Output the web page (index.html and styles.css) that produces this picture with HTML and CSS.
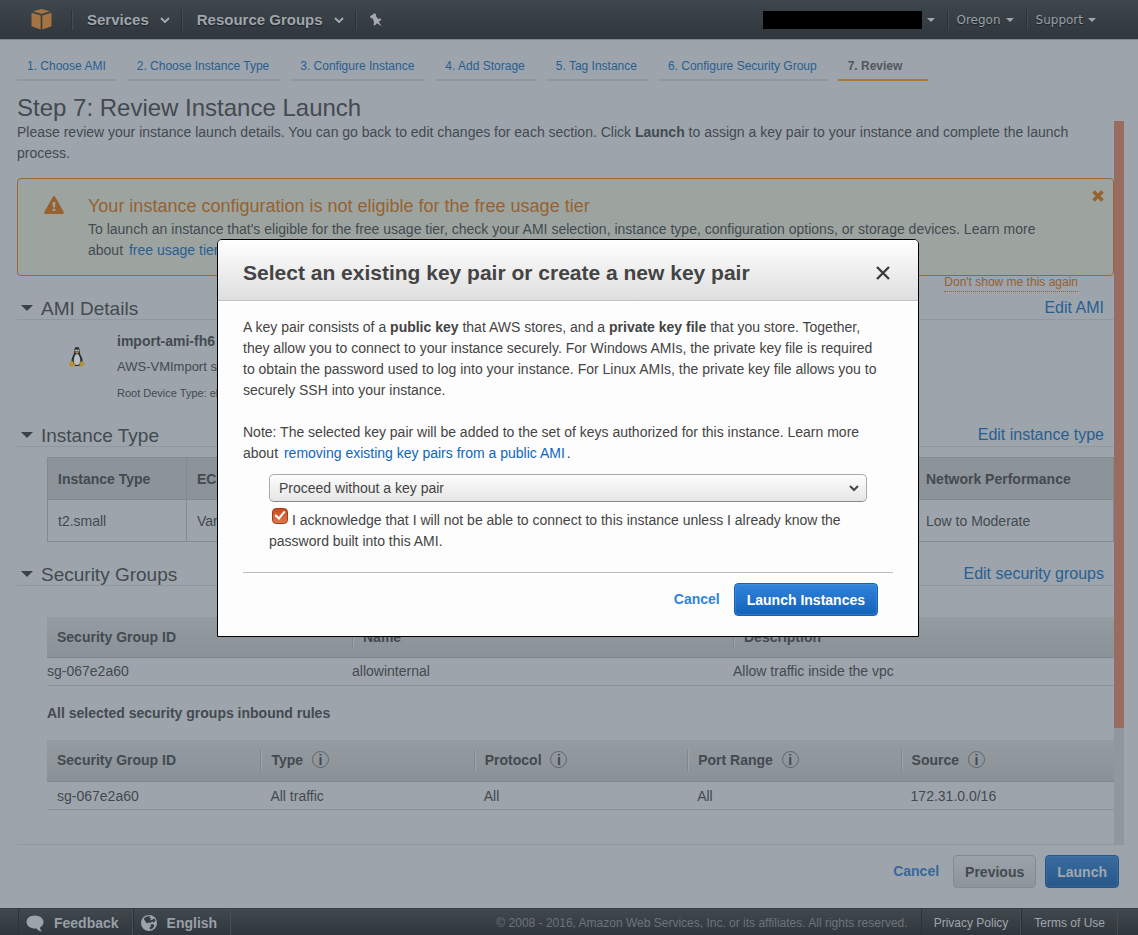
FILE: index.html
```html
<!DOCTYPE html>
<html lang="en">
  <head>
    <meta charset="UTF-8" />
    <meta name="viewport" content="width=device-width, initial-scale=1.0" />
    <title>Review Instance Launch</title>
    <link rel="stylesheet" href="styles.css">
  </head>
  <body>
    <header class="topbar">
      <a href="#" class="logo" aria-label="Home">
        <svg width="21" height="21" viewBox="0 0 21 21" fill="#a4733f">
          <path d="M10.500 0 L19 2.200 L10.500 4.900 L2 2.200 Z" />
          <path d="M0.500 3.700 L9.700 6.500 V20.500 L0.500 17.200 Z" />
          <path d="M20.500 3.700 L11.300 6.500 V20.500 L20.500 17.200 Z" />
        </svg>
      </a>
      <button class="nav-item">
        Services
        <svg width="10" height="6" viewBox="0 0 10 6"><path d="M1 1 L5 5 L9 1" /></svg>
      </button>
      <button class="nav-item">
        Resource Groups
        <svg width="10" height="6" viewBox="0 0 10 6"><path d="M1 1 L5 5 L9 1" /></svg>
      </button>
      <button class="nav-pin" aria-label="Pin shortcuts">
        <svg width="14" height="14" viewBox="0 0 14 14" fill="#a3a9af">
          <path d="M1 3.500 L5.500 0.300 L7.300 1.500 L6.800 3 L9.300 6 L11.800 5.600 L12.300 6.800 L9.800 8.800 L12.600 13.300 L8 10.300 L5.800 12.600 L4.700 12 L5 8.800 L3.400 5.300 L1.700 5.200 Z" />
        </svg>
      </button>
      <div class="nav-right">
        <button class="nav-menu" aria-label="Account"><span class="account"></span><span class="caret"></span></button>
        <button class="nav-menu">Oregon<span class="caret"></span></button>
        <button class="nav-menu">Support<span class="caret"></span></button>
      </div>
    </header>

    <main class="wizard">
      <nav class="steps">
        <a href="#">1. Choose AMI</a>
        <a href="#">2. Choose Instance Type</a>
        <a href="#">3. Configure Instance</a>
        <a href="#">4. Add Storage</a>
        <a href="#">5. Tag Instance</a>
        <a href="#">6. Configure Security Group</a>
        <a href="#" class="active">7. Review</a>
      </nav>
      <h1>Step 7: Review Instance Launch</h1>

      <div class="scroll-area">
        <div class="review">
          <p class="intro">Please review your instance launch details. You can go back to edit changes for each section. Click <b>Launch</b> to assign a key pair to your instance and complete the launch process.</p>

          <div class="alert">
            <svg class="alert-icon" width="20" height="18" viewBox="0 0 20 18">
              <path fill="#976130" d="M10 0 Q10.800 0 11.300 1 L19.700 16 Q20.200 17.900 18.500 18 H1.500 Q-0.200 17.900 0.300 16 L8.700 1 Q9.200 0 10 0 Z" />
              <path fill="#9da4a0" d="M8.500 6 H11.500 L11 11.500 H9 Z M8.700 12.700 H11.300 V15 H8.700 Z" />
            </svg>
            <div class="alert-text">
              <h2>Your instance configuration is not eligible for the free usage tier</h2>
              <p>To launch an instance that's eligible for the free usage tier, check your AMI selection, instance type, configuration options, or storage devices. Learn more about <a href="#">free usage tier</a></p>
            </div>
            <button class="alert-close" aria-label="Dismiss">
              <svg width="12" height="12" viewBox="0 0 12 12"><path d="M1.500 1.500 L10.500 10.500 M10.500 1.500 L1.500 10.500" stroke="#976130" stroke-width="3.400" /></svg>
            </button>
            <a href="#" class="alert-hide">Don't show me this again</a>
          </div>

          <div class="section-head">
            <h2>AMI Details</h2>
            <a href="#">Edit AMI</a>
          </div>
          <div class="ami">
            <svg class="tux" width="18" height="22" viewBox="0 0 18 22">
              <path fill="#2b3035" d="M9 1 C6.600 1 6.200 3 6.400 5.600 C6.500 8 4 10.500 3.600 13.500 C3.300 16 4 19 6 20 H12 C14 19 15 16.500 14.500 13.500 C14 10.500 11.600 8.500 11.700 5.600 C11.800 3 11.300 1 9 1 Z" />
              <path fill="#b9bec2" d="M9 8 C7.300 8 6 11 5.800 14 C5.700 17 7 19 9 19 C11 19 12.500 17 12.300 14 C12 11 10.700 8 9 8 Z" />
              <circle cx="8" cy="4.500" r="1" fill="#b9bec2" />
              <circle cx="10.100" cy="4.500" r="1" fill="#b9bec2" />
              <path fill="#ad8a35" d="M7 6.300 L9 5.300 L11 6.300 L9 8 Z" />
              <path fill="#b39339" d="M1 16.500 L4 14.800 L7.300 18.500 Q7.500 21 5.300 20.800 L1 19.800 Z" />
              <path fill="#b39339" d="M11.500 16.500 L15 15 L17 18 L13.500 20.700 Q11.200 21 11.300 19 Z" />
            </svg>
            <div>
              <p class="ami-name">import-ami-fh6</p>
              <p class="ami-desc">AWS-VMImport service</p>
              <p class="ami-root">Root Device Type: ebs</p>
            </div>
          </div>

          <div class="section-head">
            <h2>Instance Type</h2>
            <a href="#">Edit instance type</a>
          </div>
          <table class="type-table">
            <thead>
              <tr><th class="col-type">Instance Type</th><th>ECUs</th><th class="col-network">Network Performance</th></tr>
            </thead>
            <tbody>
              <tr><td>t2.small</td><td>Variable</td><td>Low to Moderate</td></tr>
            </tbody>
          </table>

          <div class="section-head">
            <h2>Security Groups</h2>
            <a href="#">Edit security groups</a>
          </div>
          <table class="grid groups">
            <thead>
              <tr><th class="col-id">Security Group ID</th><th class="col-name">Name</th><th>Description</th></tr>
            </thead>
            <tbody>
              <tr><td>sg-067e2a60</td><td>allowinternal</td><td>Allow traffic inside the vpc</td></tr>
            </tbody>
          </table>

          <h3>All selected security groups inbound rules</h3>
          <table class="grid rules">
            <thead>
              <tr>
                <th>Security Group ID</th>
                <th>Type <span class="info">i</span></th>
                <th>Protocol <span class="info">i</span></th>
                <th>Port Range <span class="info">i</span></th>
                <th>Source <span class="info">i</span></th>
              </tr>
            </thead>
            <tbody>
              <tr><td>sg-067e2a60</td><td>All traffic</td><td>All</td><td>All</td><td>172.31.0.0/16</td></tr>
            </tbody>
          </table>
        </div>
        <div class="scrollbar"><div class="thumb"></div></div>
      </div>

      <div class="actions">
        <a href="#" class="cancel">Cancel</a>
        <button class="btn">Previous</button>
        <button class="btn btn-primary">Launch</button>
      </div>
    </main>

    <footer class="bottombar">
      <button class="foot-item">
        <svg width="18" height="17" viewBox="0 0 18 17" fill="#9da3aa">
          <path d="M8.800 0.500 C13.500 0.500 17.500 3.300 17.500 7 C17.500 9.500 16 11.300 14 12.500 C14 14 15 15.500 16 16.500 C13.500 16.300 11.500 15 10.500 13.500 C5 14 0.500 11 0.500 7 C0.500 3.300 4 0.500 8.800 0.500 Z" />
        </svg>
        Feedback
      </button>
      <button class="foot-item">
        <svg width="16" height="16" viewBox="0 0 16 16">
          <circle cx="8" cy="8" r="8" fill="#9da3aa" />
          <path fill="#363d43" d="M6 1.500 L9 1 L8.500 2.500 L10 3.500 L9 5.500 L11.500 4.500 L13.500 3.500 L14.500 6 L12.500 7.500 L11 6.500 L9.500 8 L7.500 7.500 L6 8.500 L4 6 L2.800 3.800 L4 2.500 Z" />
          <path fill="#363d43" d="M9.500 9.500 L12 9 L13.500 11 L11.500 13.500 L9 14.500 L8.500 12.500 L10 11.500 Z" />
        </svg>
        English
      </button>
      <div class="foot-right">
        <span class="copyright">© 2008 - 2016, Amazon Web Services, Inc. or its affiliates. All rights reserved.</span>
        <a href="#">Privacy Policy</a>
        <a href="#">Terms of Use</a>
      </div>
    </footer>

    <div class="modal-wrap">
      <div class="modal" role="dialog" aria-labelledby="modalTitle">
        <div class="modal-head">
          <h2 id="modalTitle">Select an existing key pair or create a new key pair</h2>
          <button class="modal-close" aria-label="Close">
            <svg width="14" height="14" viewBox="0 0 14 14"><path d="M1 1 L13 13 M13 1 L1 13" stroke="#3c3c3c" stroke-width="2.400" /></svg>
          </button>
        </div>
        <div class="modal-body">
          <p>A key pair consists of a <b>public key</b> that AWS stores, and a <b>private key file</b> that you store. Together, they allow you to connect to your instance securely. For Windows AMIs, the private key file is required to obtain the password used to log into your instance. For Linux AMIs, the private key file allows you to securely SSH into your instance.</p>
          <p>Note: The selected key pair will be added to the set of keys authorized for this instance. Learn more about <a href="#">removing existing key pairs from a public AMI</a>.</p>
          <div class="key-form">
            <div class="select-box">
              <select aria-label="Key pair option">
                <option>Proceed without a key pair</option>
              </select>
              <svg width="10" height="7" viewBox="0 0 10 7"><path d="M1 1 L5 5 L9 1" /></svg>
            </div>
            <label class="ack"><input type="checkbox" checked>I acknowledge that I will not be able to connect to this instance unless I already know the password built into this AMI.</label>
          </div>
          <div class="modal-actions">
            <a href="#" class="cancel">Cancel</a>
            <button class="btn btn-primary">Launch Instances</button>
          </div>
        </div>
      </div>
    </div>
  </body>
</html>
```
FILE: styles.css
```css
* {
  box-sizing: border-box;
}

body {
  display: flex;
  flex-direction: column;
  height: 100vh;
  margin: 0;
  overflow: hidden;
  background: #9da4ab;
  color: #434a50;
  font-family: "Liberation Sans", Arial, sans-serif;
  font-size: 14px;
  line-height: 21px;
}

h1,
h2,
h3,
p {
  margin: 0;
  font-weight: normal;
}

a {
  color: #285f92;
  text-decoration: none;
}

button {
  padding: 0;
  border: none;
  background: none;
  font-family: inherit;
  cursor: pointer;
}

table {
  border-collapse: collapse;
  width: 100%;
}

th {
  text-align: left;
}

/* Top bar */
.topbar {
  display: flex;
  align-items: center;
  flex: none;
  height: 40px;
  padding: 0 32px 0 31px;
  background: linear-gradient(#3f474e, #2f363c);
  border-bottom: 1px solid #7f868d;
}

.logo {
  display: flex;
  padding-right: 19px;
}

.nav-item,
.nav-pin {
  display: flex;
  align-items: center;
  gap: 11px;
  height: 20px;
  padding: 0 11px 0 15px;
  border-left: 1px solid #2c3237;
  box-shadow: inset 1px 0 #454d54;
  color: #a0a6ac;
  font-size: 15px;
  font-weight: bold;
  text-shadow: 0 1px 1px #1c2125;
}

.nav-item svg {
  fill: none;
  stroke: #a0a6ac;
  stroke-width: 2;
}

.nav-pin {
  padding: 0 12px 0 13px;
}

.nav-right {
  display: flex;
  margin-left: auto;
}

.nav-menu {
  display: flex;
  align-items: center;
  gap: 5px;
  height: 20px;
  padding: 0 12px 0 9px;
  border-left: 1px solid #2c3237;
  box-shadow: inset 1px 0 #454d54;
  color: #9aa0a6;
  font-family: "DejaVu Sans", sans-serif;
  font-size: 12px;
  text-shadow: 0 1px 1px #1c2125;
}

.nav-menu:first-child {
  border-left: none;
  box-shadow: none;
}

.nav-menu:last-child {
  padding-right: 10px;
}

.account {
  width: 159px;
  height: 18px;
  background: #000;
}

.caret {
  border: 4px solid transparent;
  border-top-color: #a0a6ac;
  border-bottom: none;
}

/* Wizard */
.wizard {
  display: flex;
  flex-direction: column;
  flex: 1;
  min-height: 0;
  padding: 16px 14px 20px 17px;
}

.steps {
  display: flex;
  gap: 10px;
  font-size: 12px;
}

.steps a {
  padding: 0 11px 2px 10px;
  border-bottom: 2px solid #90979e;
}

.steps .active {
  min-width: 90px;
  border-color: #a87637;
  color: #51575d;
  font-weight: bold;
}

.wizard h1 {
  padding-top: 13px;
  font-size: 24px;
  line-height: 27px;
}

.scroll-area {
  display: flex;
  flex: 1;
  min-height: 0;
  border-bottom: 1px solid #90979e;
}

.review {
  flex: 1;
  overflow: hidden;
}

.scrollbar {
  width: 10px;
  background: #90979e;
}

.thumb {
  height: 84%;
  background: #996c60;
}

/* Free tier alert */
.intro {
  padding-top: 1px;
}

.alert {
  position: relative;
  display: flex;
  gap: 24px;
  margin: 14px 0 22px;
  padding: 15px 50px 14px 26px;
  border: 1px solid #976835;
  border-radius: 4px;
  background: #9da4a0;
}

.alert-icon {
  flex: none;
  margin-top: 2px;
}

.alert-text h2 {
  padding-bottom: 1px;
  color: #976130;
  font-size: 18px;
  line-height: 24px;
}

.alert-text a {
  padding-left: 2px;
}

.alert-close {
  position: absolute;
  top: 11px;
  right: 9px;
  display: flex;
}

.alert-hide {
  position: absolute;
  top: 94px;
  right: 35px;
  border-bottom: 1px dotted #976130;
  color: #976130;
  font-size: 12px;
  line-height: 18px;
}

/* Section headings */
.section-head {
  display: flex;
  justify-content: space-between;
  padding: 0 10px 0 24px;
  border-bottom: 1px solid #90979e;
}

.section-head h2 {
  position: relative;
  font-size: 19px;
  line-height: 21px;
}

.section-head h2::before {
  content: "";
  position: absolute;
  top: 7px;
  left: -20px;
  border: 6px solid transparent;
  border-top-color: #3a4147;
  border-bottom: none;
}

.section-head a {
  font-size: 16px;
  line-height: 20px;
}

.ami {
  display: flex;
  gap: 31px;
  padding: 10px 0 20px 51px;
}

.tux {
  margin-top: 16px;
}

.ami-name {
  font-weight: bold;
  line-height: 22px;
}

.ami-desc {
  font-size: 13px;
  line-height: 30px;
}

.ami-root {
  font-size: 11px;
  line-height: 23px;
}

/* Instance type table */
.type-table {
  width: calc(100% - 30px);
  margin: 10px 0 22px 30px;
}

.type-table th,
.type-table td {
  height: 42px;
  padding: 1px 10px 0;
  border: 1px solid #838a91;
}

.type-table th {
  background: #8c9399;
}

.type-table .col-type {
  width: 139px;
}

.type-table .col-network {
  width: 198px;
}

/* Security group tables */
.grid {
  width: calc(100% - 30px);
  margin-left: 30px;
  table-layout: fixed;
}

.grid th {
  position: relative;
  height: 40px;
  padding: 1px 11px 0;
  background: linear-gradient(#949ba1, #8a9197);
  border-bottom: 1px solid #7f868d;
}

.grid th:first-child {
  padding-left: 10px;
}

.grid th + th::before {
  content: "";
  position: absolute;
  top: 10px;
  bottom: 10px;
  left: 0;
  border-left: 1px solid #7f868d;
  border-right: 1px solid #9da4ab;
}

.grid td {
  height: 28px;
  padding: 1px 10px 0;
  border-bottom: 1px solid #8a9198;
}

.rules th {
  height: 42px;
}

.groups {
  margin-top: 31px;
}

.groups td {
  padding: 1px 0 0;
}

.col-id {
  width: 305px;
}

.col-name {
  width: 381px;
}

.review h3 {
  margin: 17px 0 16px 30px;
  font-size: 14px;
  font-weight: bold;
}

.info {
  display: inline-block;
  width: 17px;
  height: 17px;
  margin-left: 5px;
  border: 1px solid #5f666c;
  border-radius: 50%;
  line-height: 16px;
  text-align: center;
}

/* Buttons */
.actions,
.modal-actions {
  display: flex;
  align-items: center;
  justify-content: flex-end;
  gap: 9px;
}

.actions {
  padding: 10px 5px 0 0;
}

.cancel {
  margin-right: 5px;
  color: #35689c;
  font-weight: bold;
}

.btn {
  height: 33px;
  padding: 0 11px;
  border: 1px solid #838a91;
  border-radius: 4px;
  background: linear-gradient(#9ba2a8, #8d949b);
  color: #434a50;
  font-size: 14px;
  font-weight: bold;
}

.btn-primary {
  border-color: #25558a;
  background: linear-gradient(#3a6b9f, #265789);
  color: #a0a7ae;
  box-shadow: inset 0 0 2px #5481ad;
}

/* Bottom bar */
.bottombar {
  display: flex;
  flex: none;
  height: 27px;
  padding: 0 20px 0 18px;
  background: linear-gradient(#41494f, #2f363c);
  border-top: 1px solid #363d43;
}

.foot-item {
  display: flex;
  align-items: center;
  gap: 10px;
  padding: 2px 13px 0 7px;
  border-left: 1px solid #2c3237;
  border-right: 1px solid #474f55;
  color: #999fa6;
  font-size: 14px;
  font-weight: bold;
}

.foot-right {
  display: flex;
  margin-left: auto;
  font-size: 12px;
  line-height: 28px;
}

.foot-right a {
  padding: 0 12px;
  border-left: 1px solid #2c3237;
  border-right: 1px solid #454c53;
  color: #a0a6ac;
}

.copyright {
  padding-right: 13px;
  color: #6d747a;
}

/* Key pair dialog */
.modal-wrap {
  position: fixed;
  inset: 0;
  display: flex;
  align-items: flex-start;
  justify-content: center;
  padding: 239px 22px 20px 20px;
}

.modal {
  width: 702px;
  border: 1px solid #000;
  border-radius: 5px 5px 0 0;
  background: #fdfdfd;
  color: #444;
}

.modal-head {
  display: flex;
  align-items: center;
  justify-content: space-between;
  height: 61px;
  padding: 5px 28px 0 25px;
  border-bottom: 1px solid #c4c4c4;
  border-radius: 4px 4px 0 0;
  background: linear-gradient(#fff, #dedede);
}

.modal-head h2 {
  font-size: 21px;
  font-weight: bold;
}

.modal-close {
  display: flex;
}

.modal-body {
  padding: 16px 25px 20px;
}

.modal-body p {
  margin-bottom: 21px;
  padding-right: 6px;
}

.modal-body p a {
  padding: 0 2px;
  color: #0f66bf;
}

.modal-body .key-form {
  margin-top: -11px;
  padding: 0 26px 20px;
}

.select-box {
  position: relative;
}

.select-box select {
  display: block;
  width: 100%;
  height: 28px;
  padding: 0 9px;
  appearance: none;
  border: 1px solid #aaa;
  border-bottom-color: #888;
  border-radius: 5px;
  background: linear-gradient(#fdfdfd, #e6e6e6);
  color: #444;
  font-family: inherit;
  font-size: 14px;
}

.select-box svg {
  position: absolute;
  top: 11px;
  right: 8px;
  fill: none;
  stroke: #444;
  stroke-width: 2;
  pointer-events: none;
}

.ack {
  display: block;
  padding-top: 6px;
}

.ack input {
  position: relative;
  width: 16px;
  height: 16px;
  margin: 0 4px 0 3px;
  appearance: none;
  border: 1px solid #a3401c;
  border-radius: 4px;
  background: linear-gradient(#c94a1c, #e0774e);
  vertical-align: 1px;
}

.ack input::before {
  content: "";
  position: absolute;
  top: 0;
  left: 4px;
  width: 4px;
  height: 8px;
  border: solid #fff;
  border-width: 0 2px 2px 0;
  transform: rotate(40deg);
}

.modal-actions {
  padding: 10px 15px 0 0;
  border-top: 1px solid #bbb;
}

.modal-actions .cancel {
  color: #2f84dd;
}

.modal-actions .btn-primary {
  padding: 0 12px;
  border-color: #1862b3;
  background: linear-gradient(#3184da, #1261b8);
  color: #fff;
  box-shadow: inset 0 0 2px #6aa9e8;
}
```
